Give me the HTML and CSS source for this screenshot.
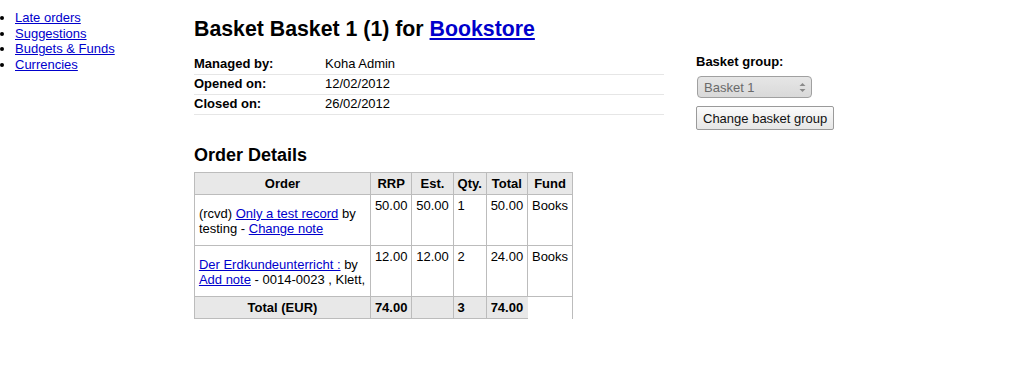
FILE: index.html
```html
<!DOCTYPE html>
<html lang="en">
<head>
<meta charset="utf-8">
<title>Basket Basket 1 (1) for Bookstore</title>
<link rel="stylesheet" href="styles.css">
</head>
<body>
<div class="page">
  <nav class="sidenav">
    <ul>
      <li><a href="#">Late orders</a></li>
      <li><a href="#">Suggestions</a></li>
      <li><a href="#">Budgets &amp; Funds</a></li>
      <li><a href="#">Currencies</a></li>
    </ul>
  </nav>
  <main class="main">
    <h1>Basket Basket 1 (1) for <a href="#">Bookstore</a></h1>
    <div class="cols">
      <div class="col-left">
        <ol class="summary">
          <li><span class="label">Managed by:</span><span>Koha Admin</span></li>
          <li><span class="label">Opened on:</span><span>12/02/2012</span></li>
          <li><span class="label">Closed on:</span><span>26/02/2012</span></li>
        </ol>
      </div>
      <div class="col-right">
        <form class="group-form">
          <label class="group-label" for="basketgroup">Basket group:</label>
          <div class="select-wrap">
            <select id="basketgroup" class="fake-select" disabled>
              <option>Basket 1</option>
            </select>
            <svg class="select-arrows" width="7" height="11" viewBox="0 0 7 11" aria-hidden="true">
              <path d="M0.5 4 L3.5 1 L6.5 4 Z" fill="#8a8a8a"/>
              <path d="M0.5 7 L3.5 10 L6.5 7 Z" fill="#8a8a8a"/>
            </svg>
          </div>
          <button type="button" class="btn">Change basket group</button>
        </form>
      </div>
    </div>
    <h2>Order Details</h2>
    <table class="orders">
      <thead>
        <tr>
          <th class="col-order">Order</th>
          <th>RRP</th>
          <th>Est.</th>
          <th>Qty.</th>
          <th>Total</th>
          <th>Fund</th>
        </tr>
      </thead>
      <tbody>
        <tr>
          <td><p>(rcvd) <a href="#">Only a test record</a> by testing - <a href="#">Change note</a></p></td>
          <td>50.00</td>
          <td>50.00</td>
          <td>1</td>
          <td>50.00</td>
          <td>Books</td>
        </tr>
        <tr>
          <td><p><a href="#">Der Erdkundeunterricht :</a> by <a href="#">Add note</a> - 0014-0023 , Klett,</p></td>
          <td>12.00</td>
          <td>12.00</td>
          <td>2</td>
          <td>24.00</td>
          <td>Books</td>
        </tr>
      </tbody>
      <tfoot>
        <tr>
          <th>Total (EUR)</th>
          <td>74.00</td>
          <td></td>
          <td>3</td>
          <td>74.00</td>
        </tr>
      </tfoot>
    </table>
  </main>
</div>
</body>
</html>
```

FILE: styles.css
```css
html, body {
  margin: 0;
  padding: 0;
  background: #fff;
}

body {
  font-family: "Liberation Sans", Arial, sans-serif;
  font-size: 13px;
  line-height: 1.231;
  color: #000;
}

a {
  color: #0000cc;
  text-decoration: underline;
}

.page {
  display: flex;
  align-items: flex-start;
}

.sidenav {
  width: 194px;
  flex: none;
}

.sidenav ul {
  margin: 10px 0 0;
  padding: 0 0 0 15px;
  list-style: disc;
  line-height: 15.6px;
}

.main {
  flex: 1;
  min-width: 0;
}

h1 {
  font-size: 21.3px;
  font-weight: bold;
  line-height: 26px;
  margin: 16px 0 13px;
}

.cols {
  display: flex;
  align-items: flex-start;
}

.col-left {
  width: 470px;
  flex: none;
}

.col-right {
  margin-left: 32px;
}

.summary {
  list-style: none;
  margin: 0;
  padding: 0;
}

.summary li {
  display: flex;
  padding: 1px 0 2px;
  border-bottom: 1px solid #e6e6e6;
}

.summary .label {
  width: 131px;
  flex: none;
  font-weight: bold;
}

.group-form {
  display: flex;
  flex-direction: column;
  align-items: flex-start;
  margin: 0;
}

.group-label {
  font-weight: bold;
  margin-top: -1px;
  margin-bottom: 6px;
}

.select-wrap {
  position: relative;
  display: inline-block;
}

.fake-select {
  appearance: none;
  -webkit-appearance: none;
  width: 115px;
  height: 22px;
  margin: 0 0 0 1px;
  padding: 0 0 0 6px;
  border: 1px solid #a0a0a0;
  border-radius: 4px;
  background: linear-gradient(#e6e6e6, #d9d9d9);
  color: #6a6a6a;
  font-family: "Liberation Sans", Arial, sans-serif;
  font-size: 13px;
  opacity: 1;
}

.select-arrows {
  position: absolute;
  right: 6px;
  top: 6px;
}

.btn {
  margin-top: 8px;
  height: 24px;
  padding: 0 6px;
  border: 1px solid #9a9a9a;
  border-radius: 2px;
  background: linear-gradient(#fbfbfb, #e6e6e6);
  color: #111;
  font-family: "Liberation Sans", Arial, sans-serif;
  font-size: 13px;
}

h2 {
  font-size: 18px;
  font-weight: bold;
  line-height: 22px;
  margin: 14px 0 6px;
}

.orders {
  border-collapse: collapse;
  border-top: 1px solid #bcbcbc;
  border-right: 1px solid #bcbcbc;
  width: 379px;
}

.orders th,
.orders td {
  border-left: 1px solid #bcbcbc;
  border-bottom: 1px solid #bcbcbc;
  padding: 2.6px 3.9px;
  vertical-align: top;
  text-align: left;
  white-space: nowrap;
}

.orders th {
  background: #e8e8e8;
  font-weight: bold;
  text-align: center;
}

.orders td:first-child {
  white-space: normal;
}

.orders td p {
  margin: 8px 0 5.5px;
  line-height: 15.6px;
}

.orders tfoot td {
  background: #e8e8e8;
  font-weight: bold;
}
```
